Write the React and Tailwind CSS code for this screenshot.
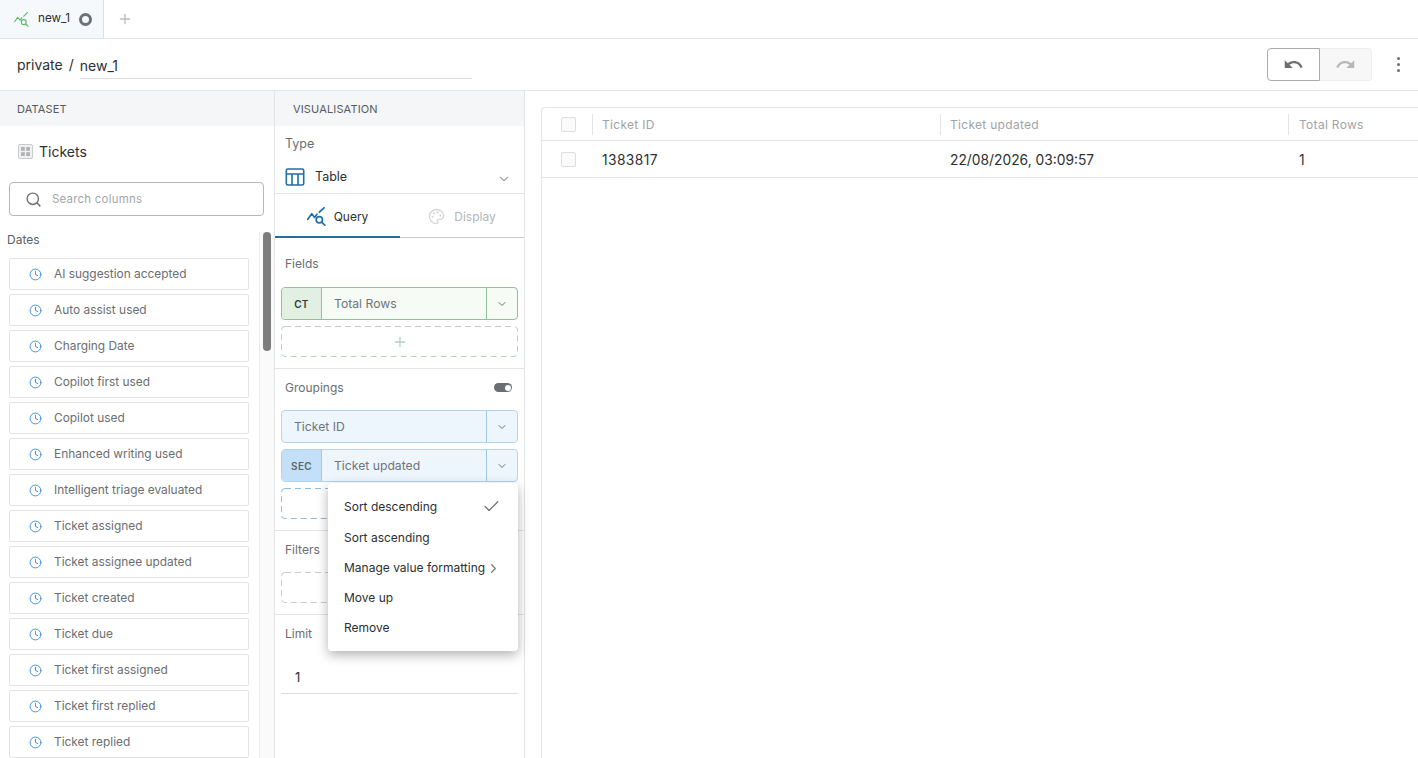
import React from "react";
import { Clock, Search, Plus, ChevronDown, ChevronRight, Check, Palette } from "lucide-react";
import { MdUndo, MdRedo } from "react-icons/md";

const dates = ["AI suggestion accepted","Auto assist used","Charging Date","Copilot first used","Copilot used","Enhanced writing used","Intelligent triage evaluated","Ticket assigned","Ticket assignee updated","Ticket created","Ticket due","Ticket first assigned","Ticket first replied","Ticket replied"];

function QueryIcon({ size = 16, color = "#1f6fa8", sw = 1.8 }) {
  return (
    <svg width={size} height={size} viewBox="0 0 20 20" fill="none" stroke={color} strokeWidth={sw} strokeLinecap="round" strokeLinejoin="round">
      <path d="M0.8 13 L5 7 L8 11 L10.5 7.5" />
      <path d="M13 5.5 L18 0.8" />
      <circle cx="13" cy="13.5" r="3.3" />
      <path d="M15.5 16 L18.8 19.2" />
    </svg>
  );
}

function SectionHead({ children, className = "" }) {
  return <div className={`h-[35px] shrink-0 pt-[1px] bg-[#f5f6f8] flex items-center text-[11px] tracking-[0.15px] text-[#555a60] ${className}`}>{children}</div>;
}

function FieldRow({ badge, label, tone }) {
  const green = tone === "green";
  return (
    <div className={`h-[33px] flex rounded-[4px] border ${green ? "border-[#93bf9b] bg-[#f6fbf6]" : "border-[#b4d4ee] bg-[#eef6fd]"}`}>
      {badge && (
        <div className={`w-[40px] shrink-0 pt-[1px] flex items-center justify-center text-[10px] font-semibold tracking-[0.3px] border-r rounded-l-[3px] ${green ? "bg-[#e1f0e2] border-[#93bf9b] text-[#2f3a33]" : "bg-[#c4e0f8] border-[#9fc8ea] text-[#5c6670]"}`}>{badge}</div>
      )}
      <div className="flex-1 flex items-center pt-[1px] pl-3 text-[12.2px] text-[#6f7478]">{label}</div>
      <div className={`w-[31px] shrink-0 flex items-center justify-center border-l ${green ? "border-[#93bf9b]" : "border-[#9fc8ea]"}`}>
        <ChevronDown size={12} color="#6b7280" />
      </div>
    </div>
  );
}

function DashedAdd({ color, height = 31, plus = false }) {
  return (
    <div className="relative flex items-center justify-center" style={{ height }}>
      <svg width="237" height={height} className="absolute left-0 top-0" fill="none">
        <rect x="0.5" y="0.5" width="236" height={height - 1} rx="3.5" stroke={color} strokeDasharray="6 4" />
      </svg>
      {plus && <Plus size={16} color="#b4d3b9" />}
    </div>
  );
}

function MenuItem({ children, h = "h-[30px]", right }) {
  return (
    <div className={`${h} pl-4 pr-[17px] flex items-center justify-between whitespace-nowrap text-[12px] text-[#2b2f33]`}>
      <span>{children}</span>
      {right}
    </div>
  );
}

export default function App() {
  return (
    <div className="h-[758px] w-[1418px] overflow-hidden bg-white flex flex-col text-[#2b2f33]" style={{ fontFamily: "Inter, 'Liberation Sans', sans-serif" }}>
      {/* Tabs */}
      <div className="h-[39px] shrink-0 flex border-b border-[#e3e4e6]">
        <div className="w-[104px] bg-[#f5f9fc] border-r border-[#dcdee0] flex items-center pl-[14px]">
          <QueryIcon size={15} color="#5fb56a" sw={1.5} />
          <span className="ml-[9px] text-[11.7px] text-[#2b2f33]">new_1</span>
          <span className="ml-[9px] w-[13px] h-[13px] rounded-full border-[3px] border-[#6b7177]" />
        </div>
        <div className="pl-[13px] flex items-center">
          <Plus size={16} color="#b9bcbf" />
        </div>
      </div>

      {/* Title */}
      <div className="h-[52px] shrink-0 flex items-center pl-[17px] pr-[11px] border-b border-[#e3e4e6]">
        <span className="text-[14px] text-[#2b2f33]">private</span>
        <span className="ml-[6px] text-[14px] text-[#2b2f33]">/</span>
        <div className="ml-[6px] w-[392px] h-[27px] mt-[2px] border-b border-[#dcdee0] flex items-center text-[14px] text-[#2b2f33]">new_1</div>
        <div className="ml-auto flex items-center">
          <div className="flex w-[105px] h-[33px]">
            <div className="w-[53px] flex items-center justify-center border border-[#a9acaf] rounded-l-[4px]">
              <MdUndo size={21} color="#6b6f73" />
            </div>
            <div className="w-[52px] flex items-center justify-center bg-[#f7f7f8] border border-l-0 border-[#eeeeef] rounded-r-[4px]">
              <MdRedo size={21} color="#b5b7b9" />
            </div>
          </div>
          <div className="ml-[24px] w-[5px] flex flex-col items-center gap-[2.5px] mr-[6px]">
            <span className="w-[3.5px] h-[3.5px] rounded-full bg-[#6b6f73]" />
            <span className="w-[3.5px] h-[3.5px] rounded-full bg-[#6b6f73]" />
            <span className="w-[3.5px] h-[3.5px] rounded-full bg-[#6b6f73]" />
          </div>
        </div>
      </div>

      <div className="flex-1 flex min-h-0">
        {/* Dataset */}
        <div className="w-[275px] shrink-0 border-r border-[#e3e4e6] flex flex-col min-h-0">
          <SectionHead className="pl-[17px]">DATASET</SectionHead>
          <div className="h-[56px] shrink-0 pl-[18px] pb-[6px] flex items-center">
            <svg width="15" height="15" viewBox="0 0 15 15" fill="none">
              <rect x="0.5" y="0.5" width="14" height="14" rx="1.5" fill="#f1f1f2" stroke="#c9cbcd" />
              <rect x="3" y="3" width="3.8" height="3.8" fill="#b0b3b6" />
              <rect x="8.2" y="3" width="3.8" height="3.8" fill="#b0b3b6" />
              <rect x="3" y="8.2" width="3.8" height="3.8" fill="#b0b3b6" />
              <rect x="8.2" y="8.2" width="3.8" height="3.8" fill="#b0b3b6" />
            </svg>
            <span className="ml-[6px] text-[14px] text-[#2b2f33]">Tickets</span>
          </div>
          <div className="ml-[9px] w-[255px] h-[34px] shrink-0 border border-[#b5b8bb] rounded-[4px] flex items-center pl-[15px]">
            <Search size={17} color="#6b6f73" />
            <span className="ml-[10px] pt-[1px] text-[11.5px] text-[#a3a6a9] tracking-[0.2px]">Search columns</span>
          </div>
          <div className="flex-1 flex min-h-0 mt-[16px]">
            <div className="w-[259px] shrink-0 overflow-hidden">
              <div className="pl-[7px] h-[16px] flex items-center text-[12px] text-[#5c6064]">Dates</div>
              <div className="mt-[10px] ml-[9px] w-[240px] flex flex-col gap-[4px]">
                {dates.map((d) => (
                  <div key={d} className="h-[32px] shrink-0 border border-[#e3e4e6] rounded-[2px] flex items-center pl-[19px] text-[11.9px] text-[#6a6e72]">
                    <Clock size={13} color="#3f8fe0" strokeWidth={1.8} />
                    <span className="ml-[12px]">{d}</span>
                  </div>
                ))}
              </div>
            </div>
            <div className="w-[15px] border-l border-[#ececed] bg-[#fafafa] pl-[3px]">
              <div className="w-[8px] h-[119px] rounded-full bg-[#7d7d7d]" />
            </div>
          </div>
        </div>

        {/* Visualisation */}
        <div className="w-[250px] shrink-0 border-r border-[#e3e4e6] flex flex-col relative min-h-0">
          <SectionHead className="pl-[18px]">VISUALISATION</SectionHead>
          <div className="h-[68px] shrink-0 border-b border-[#e3e4e6] pl-[10px] pr-[13px] flex flex-col">
            <div className="h-[36px] flex items-center text-[12.5px] text-[#6a6e72]">Type</div>
            <div className="flex items-center mt-[5px]">
              <svg width="20" height="20" viewBox="0 0 20 20" fill="none" stroke="#1f6fa8" strokeWidth="1.6">
                <rect x="1.3" y="2" width="17.4" height="16" rx="1.5" />
                <path d="M1.3 7 H18.7 M7 7 V18 M13 7 V18" />
              </svg>
              <span className="ml-[10px] text-[12.5px] text-[#2b2f33]">Table</span>
              <ChevronDown size={14} color="#a3a6a9" className="ml-auto mt-[3px]" />
            </div>
          </div>
          <div className="h-[44px] shrink-0 flex border-b border-[#c9cccf]">
            <div className="w-[125px] -mb-px border-b-2 border-[#1f6fa8] flex items-center justify-center pt-[3px]">
              <QueryIcon size={19} />
              <span className="ml-[8px] text-[12px] text-[#2b2f33]">Query</span>
            </div>
            <div className="flex-1 flex items-center justify-center pt-[2px]">
              <Palette size={17} color="#d5d7d9" />
              <span className="ml-[9px] text-[12px] text-[#b3b6b9]">Display</span>
            </div>
          </div>

          <div className="px-[6px] border-b border-[#e3e4e6] h-[131px] shrink-0">
            <div className="h-[49px] pl-1 pt-[3px] flex items-center text-[12px] text-[#6a6e72]">Fields</div>
            <FieldRow badge="CT" label="Total Rows" tone="green" />
            <div className="mt-[6px]"><DashedAdd color="#b9d3bd" plus /></div>
          </div>

          <div className="px-[6px] border-b border-[#e3e4e6] h-[162px] shrink-0">
            <div className="h-[41px] pl-1 pr-[6px] pb-[4px] flex items-center justify-between text-[12px] text-[#6a6e72]">
              <span>Groupings</span>
              <span className="w-[18px] h-[9px] rounded-full bg-[#6b6f73] flex items-center justify-end pr-[1.5px]">
                <span className="w-[6px] h-[6px] rounded-full bg-white" />
              </span>
            </div>
            <FieldRow label="Ticket ID" tone="blue" />
            <div className="mt-[6px]"><FieldRow badge="SEC" label="Ticket updated" tone="blue" /></div>
            <div className="mt-[6px]"><DashedAdd color="#8dbce0" /></div>
          </div>

          <div className="px-[6px] border-b border-[#e3e4e6] h-[84px] shrink-0">
            <div className="h-[41px] pl-1 pb-[4px] flex items-center text-[12px] text-[#6a6e72]">Filters</div>
            <DashedAdd color="#c9cccf" />
          </div>

          <div className="px-[6px]">
            <div className="h-[37px] pl-1 flex items-center text-[12px] text-[#6a6e72]">Limit</div>
            <div className="h-[37px] mt-[5px] pt-[5px] pl-[14px] border-b border-[#dcdee0] flex items-center text-[13px] text-[#2b2f33]">1</div>
          </div>

          {/* Menu */}
          <div className="absolute left-[53px] top-[392px] w-[190px] h-[168px] bg-white rounded-[4px] shadow-[0_4px_12px_rgba(0,0,0,0.3)] pt-[8px] z-10">
            <MenuItem h="h-[31px]" right={<Check size={19} color="#6b6f73" strokeWidth={1.5} />}>Sort descending</MenuItem>
            <MenuItem h="h-[31px]">Sort ascending</MenuItem>
            <MenuItem h="h-[30px]" right={<ChevronRight size={15} color="#7a7e82" />}>Manage value formatting</MenuItem>
            <MenuItem>Move up</MenuItem>
            <MenuItem>Remove</MenuItem>
          </div>
        </div>

        {/* Table */}
        <div className="flex-1 min-w-0 pl-[16px] pt-[16px]">
          <div className="h-full border-l border-t border-[#e3e4e6] rounded-tl-[4px]">
            <div className="h-[33px] flex items-center border-b border-[#e3e4e6] text-[12px] tracking-[0.3px] text-[#a0a3a6]">
              <div className="w-[51px] h-[21px] pl-[19px] flex items-center shrink-0 border-r border-[#e3e4e6]">
                <span className="w-[15px] h-[15px] border border-[#dcdee0] rounded-[2px] bg-[#fbfbfb]" />
              </div>
              <div className="w-[348px] h-[21px] pl-[9px] pt-[1px] flex items-center border-r border-[#e3e4e6] shrink-0">Ticket ID</div>
              <div className="w-[348px] h-[21px] pl-[9px] pt-[1px] flex items-center border-r border-[#e3e4e6] shrink-0">Ticket updated</div>
              <div className="pl-[10px] pt-[1px]">Total Rows</div>
            </div>
            <div className="h-[37px] flex items-center border-b border-[#e3e4e6] text-[13.8px] text-[#2b2f33]">
              <div className="w-[51px] pl-[19px] flex items-center shrink-0">
                <span className="w-[15px] h-[15px] border border-[#dcdee0] rounded-[2px] bg-[#fbfbfb]" />
              </div>
              <div className="w-[348px] pl-[9px] pt-[2px] shrink-0 tracking-[0.4px]">1383817</div>
              <div className="w-[348px] pl-[9px] pt-[2px] shrink-0">22/08/2026, 03:09:57</div>
              <div className="pl-[10px] pt-[2px]">1</div>
            </div>
          </div>
        </div>
      </div>
    </div>
  );
}
